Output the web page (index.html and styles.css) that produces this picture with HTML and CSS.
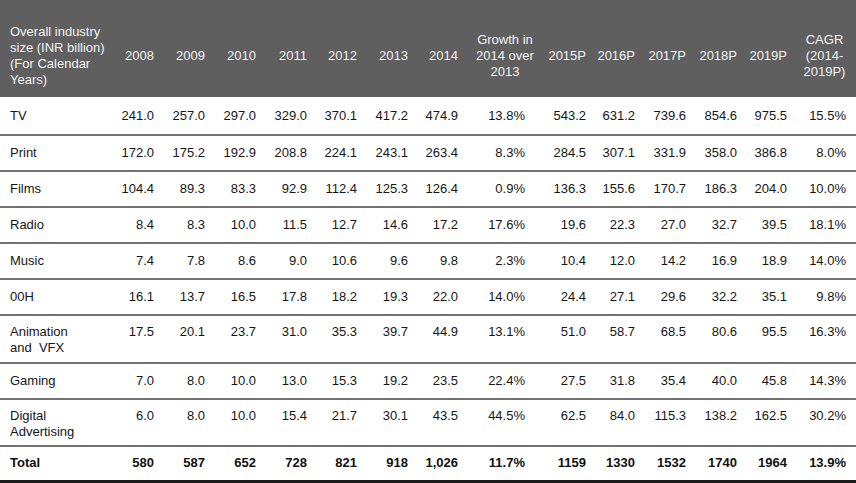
FILE: index.html
```html
<!DOCTYPE html>
<html>
<head>
<meta charset="utf-8">
<link rel="stylesheet" href="styles.css">
</head>
<body>
<table class="data">
  <colgroup>
    <col class="w-label"><col class="w50"><col class="w51"><col class="w51"><col class="w51"><col class="w50"><col class="w51"><col class="w50"><col class="w-growth"><col class="w52"><col class="w49"><col class="w51"><col class="w51"><col class="w50"><col class="w-cagr">
  </colgroup>
  <thead>
    <tr>
      <th class="label">Overall industry size (INR billion) (For Calendar Years)</th>
      <th>2008</th><th>2009</th><th>2010</th><th>2011</th><th>2012</th><th>2013</th><th>2014</th>
      <th class="growth">Growth in 2014 over 2013</th>
      <th>2015P</th><th>2016P</th><th>2017P</th><th>2018P</th><th>2019P</th>
      <th class="cagr">CAGR (2014-<br>2019P)</th>
    </tr>
  </thead>
  <tbody>
    <tr class="first">
      <td class="label">TV</td><td>241.0</td><td>257.0</td><td>297.0</td><td>329.0</td><td>370.1</td><td>417.2</td><td>474.9</td><td class="growth">13.8%</td><td>543.2</td><td>631.2</td><td>739.6</td><td>854.6</td><td>975.5</td><td class="cagr">15.5%</td>
    </tr>
    <tr>
      <td class="label">Print</td><td>172.0</td><td>175.2</td><td>192.9</td><td>208.8</td><td>224.1</td><td>243.1</td><td>263.4</td><td class="growth">8.3%</td><td>284.5</td><td>307.1</td><td>331.9</td><td>358.0</td><td>386.8</td><td class="cagr">8.0%</td>
    </tr>
    <tr>
      <td class="label">Films</td><td>104.4</td><td>89.3</td><td>83.3</td><td>92.9</td><td>112.4</td><td>125.3</td><td>126.4</td><td class="growth">0.9%</td><td>136.3</td><td>155.6</td><td>170.7</td><td>186.3</td><td>204.0</td><td class="cagr">10.0%</td>
    </tr>
    <tr>
      <td class="label">Radio</td><td>8.4</td><td>8.3</td><td>10.0</td><td>11.5</td><td>12.7</td><td>14.6</td><td>17.2</td><td class="growth">17.6%</td><td>19.6</td><td>22.3</td><td>27.0</td><td>32.7</td><td>39.5</td><td class="cagr">18.1%</td>
    </tr>
    <tr>
      <td class="label">Music</td><td>7.4</td><td>7.8</td><td>8.6</td><td>9.0</td><td>10.6</td><td>9.6</td><td>9.8</td><td class="growth">2.3%</td><td>10.4</td><td>12.0</td><td>14.2</td><td>16.9</td><td>18.9</td><td class="cagr">14.0%</td>
    </tr>
    <tr>
      <td class="label">00H</td><td>16.1</td><td>13.7</td><td>16.5</td><td>17.8</td><td>18.2</td><td>19.3</td><td>22.0</td><td class="growth">14.0%</td><td>24.4</td><td>27.1</td><td>29.6</td><td>32.2</td><td>35.1</td><td class="cagr">9.8%</td>
    </tr>
    <tr class="tall">
      <td class="label">Animation<br>and&nbsp; VFX</td><td>17.5</td><td>20.1</td><td>23.7</td><td>31.0</td><td>35.3</td><td>39.7</td><td>44.9</td><td class="growth">13.1%</td><td>51.0</td><td>58.7</td><td>68.5</td><td>80.6</td><td>95.5</td><td class="cagr">16.3%</td>
    </tr>
    <tr>
      <td class="label">Gaming</td><td>7.0</td><td>8.0</td><td>10.0</td><td>13.0</td><td>15.3</td><td>19.2</td><td>23.5</td><td class="growth">22.4%</td><td>27.5</td><td>31.8</td><td>35.4</td><td>40.0</td><td>45.8</td><td class="cagr">14.3%</td>
    </tr>
    <tr class="tall short">
      <td class="label">Digital<br>Advertising</td><td>6.0</td><td>8.0</td><td>10.0</td><td>15.4</td><td>21.7</td><td>30.1</td><td>43.5</td><td class="growth">44.5%</td><td>62.5</td><td>84.0</td><td>115.3</td><td>138.2</td><td>162.5</td><td class="cagr">30.2%</td>
    </tr>
    <tr class="total">
      <td class="label">Total</td><td>580</td><td>587</td><td>652</td><td>728</td><td>821</td><td>918</td><td>1,026</td><td class="growth">11.7%</td><td>1159</td><td>1330</td><td>1532</td><td>1740</td><td>1964</td><td class="cagr">13.9%</td>
    </tr>
  </tbody>
</table>
</body>
</html>
```

FILE: styles.css
```css
html, body {
  margin: 0;
  padding: 0;
  background: #ffffff;
}

body {
  font-family: "Liberation Sans", Arial, sans-serif;
  font-size: 13px;
  line-height: 16px;
  color: #161616;
}

.data {
  width: 856px;
  table-layout: fixed;
  border-collapse: separate;
  border-spacing: 0;
}

.w-label { width: 110px; }
.w49 { width: 49px; }
.w50 { width: 50px; }
.w51 { width: 51px; }
.w52 { width: 52px; }
.w-growth { width: 76px; }
.w-cagr { width: 63px; }

.data th {
  background: #5f5f5f;
  color: #f3f3f3;
  font-weight: normal;
  text-align: right;
  vertical-align: middle;
  padding: 24px 6px 9px 0;
  height: 64px;
}

.data th.label {
  text-align: left;
  padding-left: 10px;
  padding-right: 2px;
}

.data th.growth {
  text-align: center;
  padding-left: 8px;
  padding-right: 2px;
}

.data th.cagr {
  text-align: center;
  padding-left: 10px;
  padding-right: 10px;
}

.data td {
  text-align: right;
  vertical-align: top;
  padding: 9px 6px 9px 0;
  border-bottom: 2px solid #727272;
  white-space: nowrap;
}

.data td.label {
  text-align: left;
  padding-left: 10px;
  padding-right: 2px;
}

.data td.growth {
  padding-right: 15px;
}

.data td.cagr {
  padding-right: 10px;
}

.data tr.first td {
  padding-top: 11px;
  padding-bottom: 10px;
}

.data tr.tall td {
  padding-top: 8px;
  padding-bottom: 6px;
}

.data tr.tall.short td {
  padding-bottom: 5px;
}

.data tr.tall td:not(.label) {
  padding-bottom: 22px;
}

.data tr.tall.short td:not(.label) {
  padding-bottom: 21px;
}

.data tr.total td {
  font-weight: bold;
  color: #111;
  padding-top: 8px;
  padding-bottom: 9px;
  border-bottom: 3px solid #1a1a1a;
}
```
